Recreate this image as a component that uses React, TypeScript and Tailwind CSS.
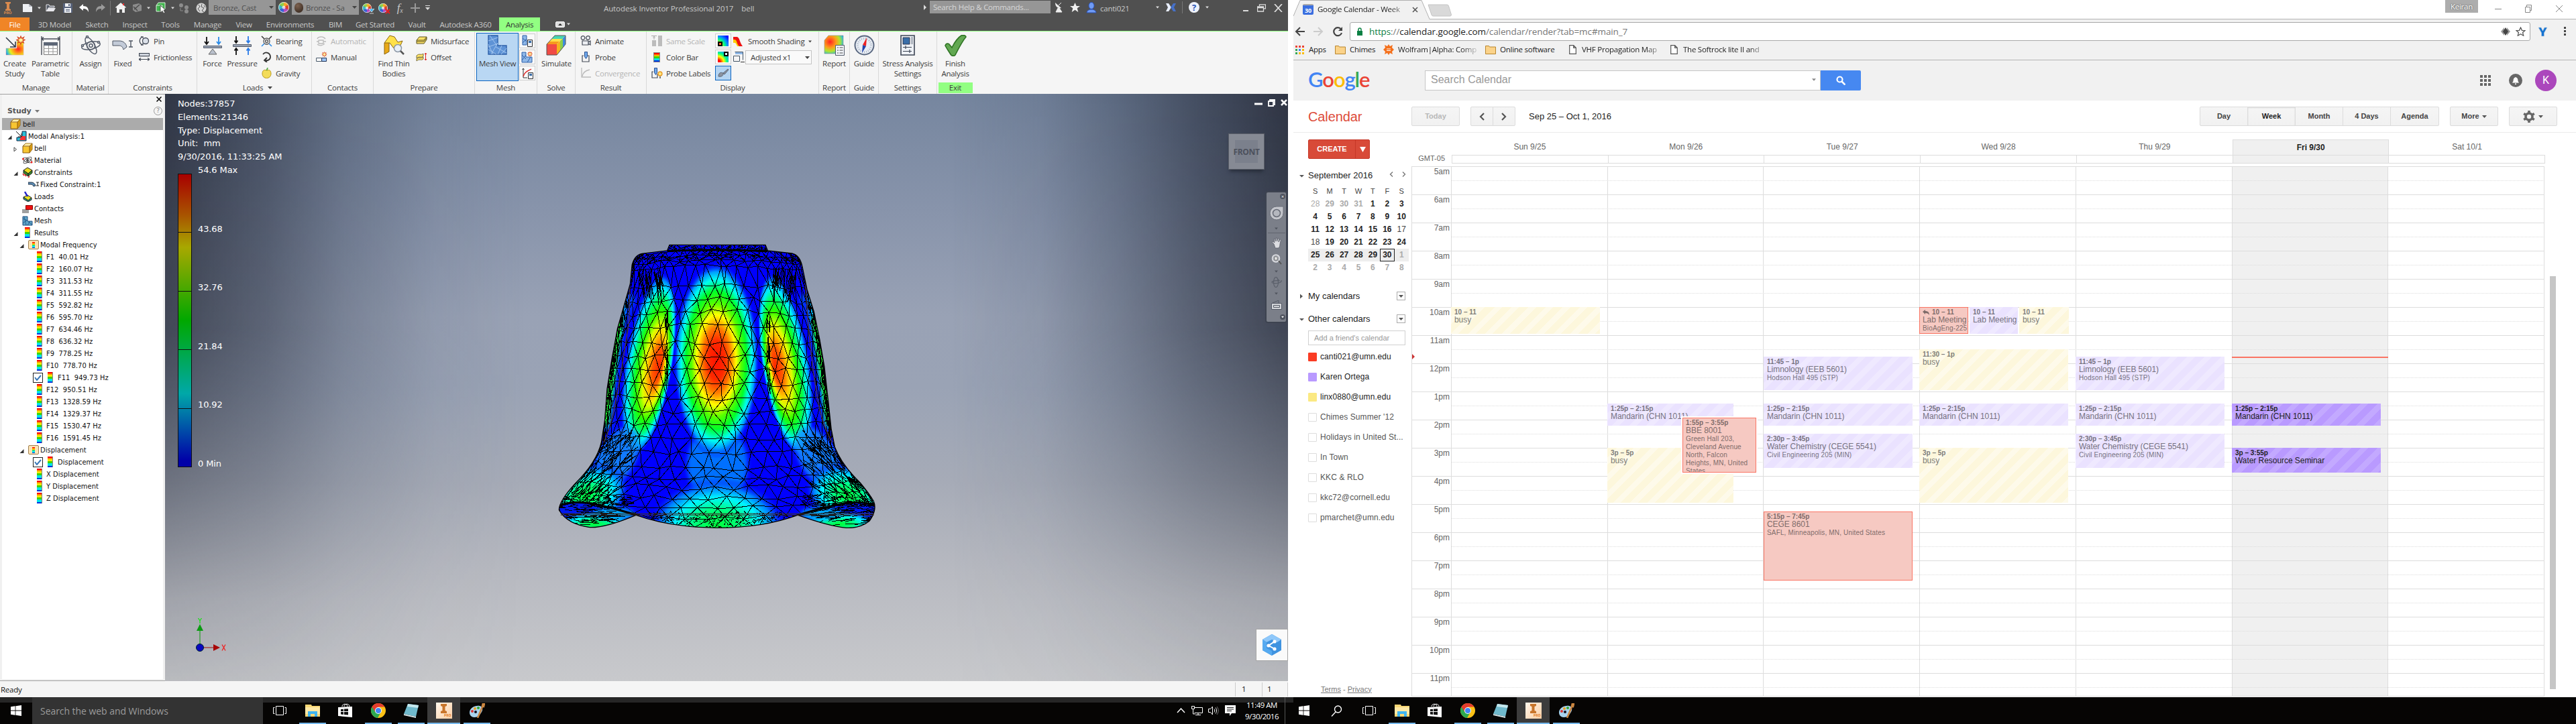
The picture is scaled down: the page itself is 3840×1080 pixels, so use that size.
import React from "react";

/* ------------------------------------------------------------------ */
/* Small shared glyphs                                                  */
/* ------------------------------------------------------------------ */

type Cls = { className?: string };

const Caret = ({ className = "text-[#444]" }: Cls) => (
  <svg width="7" height="4" viewBox="0 0 7 4" className={"shrink-0 " + className}>
    <path d="M0 0h7L3.500 4z" fill="currentColor" />
  </svg>
);

const Wheel = ({ s = 16 }: { s?: number }) => (
  <svg width={s} height={s} viewBox="0 0 16 16">
    <path d="M8 8V0a8 8 0 0 1 7 4z" fill="#f6a623" />
    <path d="M8 8l7-4a8 8 0 0 1 0 8z" fill="#e2412e" />
    <path d="M8 8l7 4a8 8 0 0 1-7 4z" fill="#b54ac0" />
    <path d="M8 8v8a8 8 0 0 1-7-4z" fill="#3a63d8" />
    <path d="M8 8l-7 4a8 8 0 0 1 0-8z" fill="#37b6c9" />
    <path d="M8 8L1 4a8 8 0 0 1 7-4z" fill="#8fd14a" />
    <circle cx="8" cy="8" r="2.500" fill="#fff" opacity=".7" />
    <circle cx="8" cy="8" r="7.500" fill="none" stroke="#ddd" />
  </svg>
);

const Heat = ({ className = "h-[16px] w-[8px]" }: Cls) => (
  <span
    className={
      "block shrink-0 border-r border-[#888] bg-[linear-gradient(#f00_0_12%,#ff8a00_12%_28%,#f4e800_28%_42%,#3fd400_42%_60%,#00e5e5_60%_86%,#0030e0_86%)] " +
      className
    }
  />
);

const Cube = () => (
  <svg width="16" height="16" viewBox="0 0 16 16">
    <path d="M1 5l4-4h10v9l-4 5H1z" fill="#f7c531" stroke="#8a5a10" />
    <path d="M1.500 5.500L5 1.500h9.500L11 5.500z" fill="#fff0b0" />
    <path d="M11 5.500l3.500-4V10L11 14.500z" fill="#d79a12" />
    <path d="M1 5h10v10M11 5l4-4" fill="none" stroke="#8a5a10" />
  </svg>
);

/* ------------------------------------------------------------------ */
/* Inventor: title bar                                                  */
/* ------------------------------------------------------------------ */

const TitleBar = () => (
  <div className="flex h-[26px] items-start text-[#c8c8c8]">
    <div className="flex h-[23px] w-[29px] flex-col items-center pr-[6px] pt-[3px]">
      <svg width="10" height="13" viewBox="0 0 10 13">
        <path d="M1 0h8v2L7 3v7l2 1v2H1v-2l2-1V3L1 2z" fill="#d98a4e" />
      </svg>
      <span className="text-[6px] font-bold leading-[7px] text-[#d98a4e]">PRO</span>
    </div>
    <div className="flex h-[23px] items-center">
      <span className="flex w-[24px] justify-center">
        <svg width="16" height="14" viewBox="0 0 16 14"><path d="M1 1h9l5 4v8H1z" fill="#eef0f4" /><path d="M10 1v4h5" fill="#b9bcc4" /></svg>
      </span>
      <span className="flex w-[10px] justify-center"><Caret className="w-[5px] text-[#ddd]" /></span>
      <span className="flex w-[26px] justify-center">
        <svg width="16" height="13" viewBox="0 0 16 13"><path d="M1 12V2h4l1 2h7v2H5z" fill="#555b66" stroke="#e8e8ec" /><path d="M4 7h11l-3 5H1z" fill="#e8e8ec" /></svg>
      </span>
      <span className="flex w-[24px] justify-center">
        <svg width="14" height="14" viewBox="0 0 14 14"><path d="M0 0h14v14H0z" fill="#59647c" /><path d="M3 0h8v5H3zM2 7h10v7H2z" fill="#f0f2f6" /><path d="M8 1h2v3H8zM4 9h6v1H4zM4 11h6v1H4z" fill="#59647c" /></svg>
      </span>
      <span className="flex w-[24px] justify-center">
        <svg width="15" height="12" viewBox="0 0 15 12"><path d="M0 5l6-5v3c6 0 8 3 8 9-2-4-4-5-8-5v3z" fill="#fff" /></svg>
      </span>
      <span className="flex w-[24px] justify-center">
        <svg width="15" height="12" viewBox="0 0 15 12"><path d="M15 5L9 0v3C3 3 1 6 1 12c2-4 4-5 8-5v3z" fill="#9a9a9a" /></svg>
      </span>
      <span className="flex h-[22px] w-[7px] justify-center"><span className="w-px bg-[#777]" /></span>
      <span className="flex w-[24px] justify-center">
        <svg width="16" height="15" viewBox="0 0 16 15"><path d="M8 0l8 7-1 1-1-1v8h-4v-5H6v5H2V7L1 8 0 7z" fill="#f2f2f2" /><path d="M11 1h2v3h-2z" fill="#e33" /></svg>
      </span>
      <span className="flex w-[24px] justify-center">
        <svg width="17" height="15" viewBox="0 0 17 15"><path d="M2 3l9-2 4 3v8l-9 2-4-3z" fill="#8c8c8c" /><path d="M4 10l8-7M3 6l6 6" stroke="#4a4a4a" strokeWidth="1.500" /></svg>
      </span>
      <span className="flex w-[10px] justify-center"><Caret className="w-[5px] text-[#ddd]" /></span>
      <span className="flex w-[28px] justify-center">
        <svg width="17" height="18" viewBox="0 0 17 18"><path d="M1 5l3-4h10v9l-3 4H1z" fill="#3fb24c" stroke="#dff5df" /><path d="M1 5h9v9" fill="none" stroke="#dff5df" /><path d="M7 5v11l3-3 2 4 2-1-2-4h3z" fill="#fff" stroke="#333" strokeWidth=".8" /></svg>
      </span>
      <span className="flex w-[6px] justify-center"><Caret className="w-[5px] text-[#ddd]" /></span>
      <span className="flex w-[28px] justify-center">
        <svg width="16" height="16" viewBox="0 0 16 16" fill="#8c8c8c"><circle cx="4" cy="4" r="3" /><circle cx="12" cy="7" r="3" /><circle cx="12" cy="13" r="3" /><path d="M3 8v4h4" stroke="#8c8c8c" fill="none" /></svg>
      </span>
      <span className="flex w-[23px] justify-center">
        <svg width="16" height="16" viewBox="0 0 16 16"><circle cx="8" cy="8" r="7.500" fill="#d4d4d4" /><path d="M4 3l2 3-3 3 3 4M9 2l-1 4 4 2-3 4 3 2M12 4l2 3" stroke="#555" fill="none" /></svg>
      </span>
    </div>
    <div className="flex h-[22px] w-[100px] items-center justify-between bg-[#969696] pl-[7px] pr-[3px] text-[#505050]">
      <span>Bronze, Cast</span><Caret />
    </div>
    <span className="flex h-[22px] w-[24px] items-center justify-center"><Wheel /></span>
    <div className="flex h-[22px] w-[100px] items-center bg-[#969696] pl-[4px] pr-[3px] text-[#505050]">
      <span className="mr-[4px] h-[15px] w-[13px] rounded-full bg-[radial-gradient(circle_at_35%_30%,#7d6250,#2d2018)]" />
      <span className="flex-1">Bronze - Sa</span><Caret />
    </div>
    <div className="flex h-[23px] items-center">
      <span className="relative flex w-[24px] justify-center"><Wheel s={14} />
        <svg width="8" height="8" viewBox="0 0 8 8" className="absolute -bottom-[2px] right-[1px]"><path d="M0 0h8L4 5zM1 7h6" fill="#3fb0e8" stroke="#fff" strokeWidth=".7" /></svg>
      </span>
      <span className="relative flex w-[24px] justify-center"><Wheel s={14} />
        <svg width="8" height="8" viewBox="0 0 8 8" className="absolute -bottom-[2px] right-[1px]"><path d="M1 1l6 6M7 1L1 7" stroke="#e02020" strokeWidth="2" /></svg>
      </span>
      <span className="w-[26px] text-center font-['Liberation_Serif'] text-[17px] italic leading-[20px]">f<sub className="text-[10px]">x</sub></span>
      <span className="flex w-[20px] justify-center"><svg width="14" height="14" viewBox="0 0 14 14"><path d="M7 0v14M0 7h14" stroke="#999" strokeWidth="2" /></svg></span>
      <span className="flex w-[16px] justify-center"><svg width="7" height="8" viewBox="0 0 7 8"><path d="M0 0h7v1H0zM0 3h7L3.500 7z" fill="#ddd" /></svg></span>
    </div>
    <div className="ml-[255px] flex h-[24px] w-[474px] items-center gap-[12px] tracking-[-0.1px]">
      <span>Autodesk Inventor Professional 2017</span><span>bell</span>
    </div>
    <div className="flex h-[22px] items-center">
      <svg width="12" height="8" viewBox="0 0 12 8"><path d="M3 0l4 4-4 4z" fill="#ddd" /></svg>
      <div className="mt-[-1px] flex h-[19px] w-[180px] items-center bg-[#969696] pl-[5px] text-[#d6d6d6]">Search Help &amp; Commands...</div>
      <span className="flex w-[24px] justify-center">
        <svg width="13" height="16" viewBox="0 0 13 16"><path d="M1 1c0 6 4 9 9 8z" fill="#eee" /><path d="M5 9l-3 6h9L7 9M6 5l4-4" stroke="#eee" fill="#eee" /></svg>
      </span>
      <span className="flex w-[24px] justify-center">
        <svg width="15" height="14" viewBox="0 0 15 14"><path d="M7.500 0l2.200 5H15l-4.300 3.300L12.300 14 7.500 10.700 2.700 14l1.600-5.700L0 5h5.300z" fill="#f2f2f2" /></svg>
      </span>
      <span className="flex w-[25px] justify-center">
        <svg width="16" height="17" viewBox="0 0 16 17"><ellipse cx="8" cy="5.500" rx="4" ry="5" fill="#6f9bf5" stroke="#2a4fb0" /><path d="M1 16c0-3 3-5 7-5s7 2 7 5z" fill="#6f9bf5" stroke="#2a4fb0" /></svg>
      </span>
      <span className="mt-[2px] w-[84px] pl-[1px]">canti021</span>
      <Caret className="w-[5px] text-[#ddd]" />
      <span className="flex w-[34px] justify-center">
        <svg width="15" height="14" viewBox="0 0 15 14"><path d="M0 1h4l4 6-4 6H0l3-6z" fill="#e8eefc" /><path d="M15 1h-4L7 7l4 6h4l-3-6z" fill="#4670c8" /></svg>
      </span>
      <span className="h-[18px] w-px bg-[#777]" />
      <span className="flex w-[34px] justify-center">
        <span className="flex h-[16px] w-[16px] items-center justify-center rounded-full bg-[#eef2fb] text-[13px] font-bold text-[#2a55b4]">?</span>
      </span>
      <Caret className="w-[5px] text-[#ddd]" />
    </div>
    <div className="ml-[50px] flex h-[24px] items-center gap-[12px]">
      <svg width="10" height="12" viewBox="0 0 10 12"><path d="M1 10h8" stroke="#ddd" strokeWidth="2" /></svg>
      <svg width="13" height="12" viewBox="0 0 13 12"><path d="M3.500 3V.9h9v6H10M.500 4h9v7h-9zM.500 5.500h9" stroke="#ddd" fill="none" strokeWidth="1.300" /></svg>
      <svg width="13" height="12" viewBox="0 0 13 12"><path d="M1 0l11 12M12 0L1 12" stroke="#ddd" strokeWidth="1.800" /></svg>
    </div>
  </div>
);

const TabRow = () => (
  <div className="flex h-[20px] items-center text-[#c8c8c8]">
    <span className="flex h-full w-[44px] items-center justify-center bg-[#f08526] text-white">File</span>
    <span className="w-[75px] text-center">3D Model</span>
    <span className="w-[51px] text-center">Sketch</span>
    <span className="w-[62px] text-center">Inspect</span>
    <span className="w-[44px] text-center">Tools</span>
    <span className="w-[67px] text-center">Manage</span>
    <span className="w-[41px] text-center">View</span>
    <span className="w-[97px] text-center">Environments</span>
    <span className="w-[38px] text-center">BIM</span>
    <span className="w-[80px] text-center">Get Started</span>
    <span className="w-[45px] text-center">Vault</span>
    <span className="w-[100px] text-center">Autodesk A360</span>
    <span className="flex h-full w-[61px] items-center justify-center bg-[#92ff82] text-[#333]">Analysis</span>
    <span className="ml-[23px] flex h-[9px] w-[14px] items-center justify-center rounded-[2px] border border-white bg-[#ddd]">
      <svg width="6" height="3" viewBox="0 0 6 3"><path d="M0 3h6L3 0z" fill="#222" /></svg>
    </span>
    <Caret className="ml-[3px] w-[5px] text-[#ddd]" />
  </div>
);

/* ------------------------------------------------------------------ */
/* Inventor: ribbon                                                     */
/* ------------------------------------------------------------------ */

const Panel = ({ label, className = "", children }: { label: React.ReactNode; className?: string; children: React.ReactNode }) => (
  <div className={"flex h-full shrink-0 flex-col border-r border-[#d9d9d9] " + className}>
    <div className="flex h-[75px] items-start pt-[2px]">{children}</div>
    <div className="flex h-[17px] items-center justify-center text-[#3c3c3c]">{label}</div>
  </div>
);

const Big = ({ icon, a, b, className = "" }: { icon: React.ReactNode; a: string; b?: string; className?: string }) => (
  <div className={"flex shrink-0 flex-col items-center pt-[2px] " + className}>
    <div className="flex h-[33px] items-center justify-center">{icon}</div>
    <div className="mt-[3px] whitespace-nowrap text-center leading-[15px]">{a}{b && <><br />{b}</>}</div>
  </div>
);

const Small = ({ icon, text, off }: { icon: React.ReactNode; text: string; off?: boolean }) => (
  <div className={"flex h-[24px] items-center whitespace-nowrap " + (off ? "text-[#b4b4b4]" : "")}>
    <span className="mr-[5px] flex w-[18px] justify-center">{icon}</span>{text}
  </div>
);

const Tile = ({ on, children }: { on?: boolean; children: React.ReactNode }) => (
  <span className={"flex h-[22px] w-[24px] items-center justify-center border " + (on ? "border-[#0a64c0] bg-[#b4d4f2]" : "border-[#cdcdcd] bg-[#fafafa]")}>{children}</span>
);

const Star = () => <path d="M0-5l1.200 3.200L4.500-3.600 2.900-.6 6 .6 3 1.900l1.300 3L1.300 3.600 0 7-1.300 3.600l-3 1.300L-3 1.900-6 .6l3.100-1.200-1.600-3 3.300 1.800z" fill="#fff3a0" stroke="#d8421c" strokeWidth="1.200" />;

const ico = {
  create: <svg width="31" height="30" viewBox="0 0 31 30"><defs><radialGradient id="cs" cx=".7" cy=".6" r=".8"><stop offset="0" stopColor="#f22" /><stop offset=".35" stopColor="#ff9b1a" /><stop offset=".6" stopColor="#e9ee20" /><stop offset=".85" stopColor="#2bc0d8" /><stop offset="1" stopColor="#2a6fd8" /></radialGradient></defs><path d="M2 19h16V7h10v22H2z" fill="url(#cs)" stroke="#d99" strokeWidth=".5" /><path d="M2 3l14 14M16 9v8H8" stroke="#333b48" strokeWidth="1.600" fill="none" /><g transform="translate(24 6)"><Star /></g></svg>,
  table: <svg width="31" height="30" viewBox="0 0 31 30"><path d="M2 1v28M29 1v28M2 5h27M5 2.500L2 5l3 2.500M26 2.500L29 5l-3 2.500" stroke="#4a4f59" fill="none" strokeWidth="1.400" /><path d="M5.500 10.500h20v18h-20z" fill="#fff" stroke="#777" /><path d="M5 10h21v5H5z" fill="#5d6676" /><path d="M5 19.500h21M5 24h21M12.500 15v14M19 15v14" stroke="#999" /></svg>,
  atom: <svg width="31" height="30" viewBox="0 0 31 30" fill="none" stroke="#555d6b" strokeWidth="1.500"><ellipse cx="15.500" cy="15" rx="14" ry="5.500" transform="rotate(-12 15.500 15)" /><ellipse cx="15.500" cy="15" rx="14" ry="5.500" transform="rotate(60 15.500 15)" /><circle cx="15.500" cy="15" r="6" /><circle cx="15.500" cy="15" r="2.500" /><circle cx="3" cy="15" r="1.500" fill="#fff" /><circle cx="27" cy="10" r="1.500" fill="#fff" /><circle cx="10" cy="2" r="1.500" fill="#fff" /></svg>,
  fixed: <svg width="32" height="20" viewBox="0 0 32 20"><path d="M1 3h10c6 0 10 4 11 9l-5 4c-1-4-3-6-7-6H1z" fill="#c3cbd8" stroke="#4d5563" /><path d="M25 3h6M25 12h6M28 3v9" stroke="#4d5563" strokeWidth="1.400" /></svg>,
  force: <svg width="30" height="30" viewBox="0 0 30 30"><path d="M6 2v11M3 9l3 4 3-4" stroke="#111" fill="none" strokeWidth="1.800" /><path d="M24 2v11M21 9l3 4 3-4" stroke="#2a8be8" fill="none" strokeWidth="1.800" /><path d="M1.500 15.500h27v3h-27z" fill="#98a2b3" stroke="#555d6b" /><path d="M15 20l-6 8h12z" fill="#b9c0cc" stroke="#666" /></svg>,
  pressure: <svg width="30" height="30" viewBox="0 0 30 30"><path d="M6 1v10M3.500 7.500L6 11l2.500-3.500M6 29V19M3.500 22.500L6 19l2.500 3.500" stroke="#111" fill="none" strokeWidth="1.800" /><path d="M24 1v10M21.500 7.500L24 11l2.500-3.500M24 29V19M21.500 22.500L24 19l2.500 3.500" stroke="#2a7be8" fill="none" strokeWidth="1.800" /><path d="M1.500 13.500h27v3h-27z" fill="#98a2b3" stroke="#555d6b" /></svg>,
  thin: <svg width="31" height="31" viewBox="0 0 31 31"><path d="M1 12l7-3v16l-7 4z" fill="#e8a817" stroke="#8a6410" /><path d="M1 12L9 1l7 2 5 8 7-2-6 13-7-2-6-8z" fill="#ffe14a" stroke="#8a6410" /><circle cx="21" cy="20" r="5.500" fill="#e8f0f8" stroke="#8c97a5" strokeWidth="1.500" /><path d="M25 24l5 5" stroke="#555" strokeWidth="2.500" /></svg>,
  mesh: <svg width="30" height="31" viewBox="0 0 30 31"><path d="M1 1h14v15h13v13H1z" fill="#5e93d6" stroke="#2d5fa8" strokeWidth="1.400" /><path d="M1 9L15 4M3 1l10 14M1 18l14-5M1 22l12 7M5 29L15 12M15 29l6-13M12 18l16 9M20 29l8-9M1 14l7 15" stroke="#a9c9f0" strokeWidth=".9" /></svg>,
  simulate: <svg width="31" height="31" viewBox="0 0 31 31"><path d="M1 14h15v16H1z" fill="#f14b45" /><path d="M1 14L5 10h15l-4 4z" fill="#f79a1d" /><path d="M5 10l3.500-4H24l-4 4z" fill="#ffe14a" /><path d="M8.500 6L13 1h16l-5 5z" fill="#47d6b2" /><path d="M16 14l5-5v15l-5 6z" fill="#f5b41d" /><path d="M21 9l4-4v14l-4 5z" fill="#8bd04a" /><path d="M25 5l4-4v13l-4 5z" fill="#3f8de0" /><path d="M1 14L13 1h16v13L16 30H1z" fill="none" stroke="#555" /></svg>,
  report: <svg width="31" height="31" viewBox="0 0 31 31"><defs><radialGradient id="rp" cx=".3" cy=".35" r=".8"><stop offset="0" stopColor="#f22" /><stop offset=".4" stopColor="#ff9b1a" /><stop offset=".65" stopColor="#b6e22a" /><stop offset=".9" stopColor="#2bc0d8" /><stop offset="1" stopColor="#2a6fd8" /></radialGradient></defs><path d="M1 8l6-7h22v16l-7 11H1z" fill="url(#rp)" stroke="#888" strokeWidth=".6" /><path d="M17.500 15.500h13v15h-13z" fill="#f2f5fa" stroke="#555d6b" /><path d="M20 19h2M20 23h2M20 27h2M23.500 19h5M23.500 23h5M23.500 27h5" stroke="#444" /></svg>,
  guide: <svg width="31" height="31" viewBox="0 0 31 31"><circle cx="15.500" cy="15.500" r="14" fill="#e9eef5" stroke="#5a6880" strokeWidth="2" /><circle cx="15.500" cy="15.500" r="10" fill="none" stroke="#a9b4c4" strokeDasharray="1 2" strokeWidth="3" /><path d="M19 4l-1 13-5-2z" fill="#e22" /><path d="M12 27l1-12 5 2z" fill="#24a" /></svg>,
  settings: <svg width="22" height="31" viewBox="0 0 22 31"><path d="M1 1h20v29H1z" fill="#eef1f6" stroke="#3d4554" strokeWidth="1.600" /><path d="M4 4h10v10H4z" fill="#3a6ea8" stroke="#223" strokeWidth=".8" /><path d="M16 3h3v11h-3z" fill="#b0b6c0" /><path d="M4 18.500h13M4 24.500h13M8 16v5M14 22v5" stroke="#3d4554" strokeWidth="1.200" /></svg>,
  finish: <svg width="33" height="32" viewBox="0 0 33 32"><path d="M1 16c1-3 4-4 6-2l4 5C15 11 20 4 25 1c3-1 7 0 7 2C26 10 21 20 16 30c-2 2-5 2-7-1C6 24 3 20 1 16z" fill="#62a852" stroke="#2f7424" strokeWidth="1.600" /></svg>,
  pin: <svg width="16" height="16" viewBox="0 0 16 16" fill="none" stroke="#444b57" strokeWidth="1.300"><circle cx="10" cy="8" r="4.500" fill="#dde2ea" /><path d="M5 2C0 5 0 11 5 14M3 14h3v-3M3 2h3v2" /></svg>,
  frict: <svg width="16" height="13" viewBox="0 0 16 13" fill="none" stroke="#444b57" strokeWidth="1.200"><path d="M.6.600h15v4H.6z" fill="#dde2ea" /><path d="M0 9.500h16M3 7.500L0 9.500l3 2M13 7.500l3 2-3 2" /></svg>,
  bearing: <svg width="17" height="17" viewBox="0 0 17 17" fill="none"><path d="M1 1l4 4M16 1l-4 4" stroke="#333" strokeWidth="1.500" /><path d="M1 16l4-4M16 16l-4-4" stroke="#2a8be8" strokeWidth="1.500" /><circle cx="8.500" cy="8.500" r="4.500" stroke="#555" strokeWidth="1.300" /><circle cx="8.500" cy="8.500" r="2" stroke="#555" strokeWidth="1.300" /></svg>,
  moment: <svg width="15" height="16" viewBox="0 0 15 16" fill="none" stroke="#333" strokeWidth="1.800"><path d="M2 4c4-5 11-2 11 4 0 4-4 6-8 5M8 9l-4 4 4 3" /></svg>,
  gravity: <svg width="15" height="16" viewBox="0 0 15 16"><path d="M7.500 4C3 2 1 5 1 9c0 4 3 6.500 6.500 6.500S14 13 14 9c0-4-2-7-6.500-5z" fill="#f3dc5a" stroke="#b99a20" /><path d="M7.500 4L9 0" stroke="#5a4" strokeWidth="1.800" /></svg>,
  auto: <svg width="16" height="16" viewBox="0 0 16 16" fill="none" stroke="#bbb" strokeWidth="1.300"><path d="M2 5c1-3 8-5 12 0M4 7h7v5H4zM1 9h3M11 9h4M2 13c3 3 9 2 11-1" /></svg>,
  manual: <svg width="17" height="16" viewBox="0 0 17 16"><path d="M.600 9.500h8v5h-8z" fill="#fff" stroke="#456" /><path d="M8.600 9.500h7v5h-7z" fill="#9cc4f5" stroke="#235" /><g transform="translate(12.500 3.500) scale(.6)"><Star /></g></svg>,
  mid: <svg width="17" height="14" viewBox="0 0 17 14"><path d="M1 6l4-5h11v4l-4 6H1z" fill="#ffe36a" stroke="#5a5320" /><path d="M1 8h11l4-5M1 6h11l4-5" stroke="#5a5320" fill="none" /></svg>,
  off: <svg width="17" height="14" viewBox="0 0 17 14"><path d="M1 5c4-4 6 0 10-3v4C8 9 5 5 1 9zM1 10c4-4 6 0 10-3v3c-3 3-6-1-10 3z" fill="#ffe36a" stroke="#5a5320" strokeWidth=".8" /><path d="M14.500 1v11M13 3l1.500-2L16 3M13 10l1.500 2 1.500-2" stroke="#d22" fill="none" /></svg>,
  animate: <svg width="16" height="16" viewBox="0 0 16 16" fill="#eef0f4" stroke="#444b57" strokeWidth="1.200"><circle cx="4" cy="3.500" r="2.800" /><circle cx="11.500" cy="3.500" r="2.800" /><path d="M3 8h9v6H3zM12 10l3-2v6l-3-2" /></svg>,
  probe: <svg width="13" height="16" viewBox="0 0 13 16"><path d="M4.500.500h4v7l-2 3-2-3z" fill="#6fa8ea" stroke="#2a4f90" /><path d="M3 6H1v9h10V6H9" fill="none" stroke="#444b57" strokeWidth="1.200" /></svg>,
  probeLabel: <svg width="17" height="16" viewBox="0 0 17 16"><path d="M4.500.500h4v7l-2 3-2-3z" fill="#6fa8ea" stroke="#2a4f90" /><path d="M3 6H1v9h8V9" fill="none" stroke="#444b57" strokeWidth="1.200" /><circle cx="13" cy="9" r="3" fill="#ffe680" stroke="#e8961c" strokeWidth="1.300" /><path d="M12 13h2v3h-2z" fill="#777" /></svg>,
  conv: <svg width="16" height="16" viewBox="0 0 16 16" fill="none" stroke="#bbb" strokeWidth="1.300"><path d="M2 0v14h14M3 13C4 7 8 4 14 3" /></svg>,
  same: <svg width="16" height="16" viewBox="0 0 16 16"><path d="M10 0h6v16h-6zM1 7h6v9H1z" fill="#bcbcbc" /><path d="M0 .500h8M4 1v5M2.500 3.500L4 1.500l1.500 2" stroke="#aaa" fill="none" /></svg>,
  meshdoc: <svg width="16" height="18" viewBox="0 0 16 18"><path d="M1 1h6v14H1z" fill="#8fb8e8" stroke="#2d5fa8" /><path d="M1 5l6 5M1 12l6-6" stroke="#2d5fa8" /><path d="M8.500 7.500h7v10h-7z" fill="#eef1f6" stroke="#333" /><path d="M10 9h4v3h-4z" fill="#3a6ea8" /></svg>,
  meshnew: <svg width="18" height="18" viewBox="0 0 18 18"><path d="M1 2h6v7h9v8H1z" fill="#8fb8e8" stroke="#2d5fa8" /><path d="M1 6l6 6M1 14l6-8M9 17l5-8" stroke="#2d5fa8" /><g transform="translate(13 4) scale(.6)"><Star /></g></svg>,
  graph: <svg width="17" height="17" viewBox="0 0 17 17"><path d="M2 1v14h6M2 1L.500 3M2 1l1.500 2" stroke="#333" fill="none" /><path d="M2 13C4 6 9 5 14 2" stroke="#d22" strokeWidth="1.400" fill="none" /><path d="M9.500 7.500h7v9h-7z" fill="#eef1f6" stroke="#333" /><path d="M11 9h4v3h-4z" fill="#3a6ea8" /></svg>,
  smooth: <svg width="14" height="14" viewBox="0 0 14 14"><path d="M0 0h6c4 2 3 7 8 14H8C5 11 6 6 0 8z" fill="#e11" /><path d="M0 4c7-1 4 6 9 10H6C4 10 4 8 0 9z" fill="#fc0" /></svg>,
  adjust: <svg width="17" height="17" viewBox="0 0 17 17"><path d="M2.500.500h12v12M.500 6.500h9v8h-9z" fill="none" stroke="#456" /><path d="M3 1h11v3H3z" fill="#8fb8e8" /><path d="M11 15.500h6" stroke="#333" /></svg>,
  brush: <svg width="17" height="15" viewBox="0 0 17 15"><path d="M1 12c0-5 3-7 7-5 1 4-3 6-7 5zM8 7l7-6 1 1-6 7z" fill="#8c93a0" stroke="#4d5563" strokeWidth=".8" /></svg>,
};

const MaxTile = ({ flip }: { flip?: boolean }) => (
  <span className={"relative block h-[16px] w-[16px] " + (flip ? "bg-[radial-gradient(circle_at_0%_100%,#f00_15%,#ff0_40%,#0f8_60%,#08f_85%)]" : "bg-[radial-gradient(circle_at_0%_100%,#ff0_20%,#0f8_45%,#08f_65%,#00f_90%)]")}>
    <span className={"absolute h-[7px] w-[7px] border-2 border-black " + (flip ? "right-0 top-0 bg-[#dff]" : "bottom-0 left-0 bg-[#f62]")} />
  </span>
);

const Ribbon = () => (
  <div className="flex h-[94px] border-t border-[#92ff82] bg-[#f5f5f5] text-[#3c3c3c]">
    <Panel className="w-[108px]" label="Manage">
      <Big className="w-[44px]" icon={ico.create} a="Create" b="Study" />
      <Big className="w-[62px]" icon={ico.table} a="Parametric" b="Table" />
    </Panel>
    <Panel className="w-[54px]" label="Material"><Big className="w-[54px]" icon={ico.atom} a="Assign" /></Panel>
    <Panel className="w-[132px]" label="Constraints">
      <Big className="w-[42px]" icon={ico.fixed} a="Fixed" />
      <div className="ml-[2px]"><Small icon={ico.pin} text="Pin" /><Small icon={ico.frict} text="Frictionless" /></div>
    </Panel>
    <Panel className="w-[171px]" label={<span className="flex items-center gap-[7px] pl-[10px]">Loads <Caret /></span>}>
      <Big className="w-[45px]" icon={ico.force} a="Force" />
      <Big className="w-[44px]" icon={ico.pressure} a="Pressure" />
      <div className="ml-[5px]"><Small icon={ico.bearing} text="Bearing" /><Small icon={ico.moment} text="Moment" /><Small icon={ico.gravity} text="Gravity" /></div>
    </Panel>
    <Panel className="w-[92px]" label="Contacts">
      <div className="ml-[5px]"><Small icon={ico.auto} text="Automatic" off /><Small icon={ico.manual} text="Manual" /></div>
    </Panel>
    <Panel className="w-[151px]" label="Prepare">
      <Big className="w-[60px]" icon={ico.thin} a="Find Thin" b="Bodies" />
      <div className="ml-[2px]"><Small icon={ico.mid} text="Midsurface" /><Small icon={ico.off} text="Offset" /></div>
    </Panel>
    <Panel className="w-[93px]" label="Mesh">
      <div className="ml-[2px] h-[72px] w-[63px] border border-[#0a64c0] bg-[#b9d7f3]"><Big icon={ico.mesh} className="-ml-px -mt-px w-[63px]" a="Mesh View" /></div>
      <div className="ml-px mt-px flex flex-col gap-[2px]"><Tile>{ico.meshdoc}</Tile><Tile>{ico.meshnew}</Tile><Tile>{ico.graph}</Tile></div>
    </Panel>
    <Panel className="w-[57px]" label="Solve"><Big className="w-[57px]" icon={ico.simulate} a="Simulate" /></Panel>
    <Panel className="w-[106px]" label="Result">
      <div className="ml-[6px]"><Small icon={ico.animate} text="Animate" /><Small icon={ico.probe} text="Probe" /><Small icon={ico.conv} text="Convergence" off /></div>
    </Panel>
    <Panel className="w-[257px]" label="Display">
      <div className="ml-[6px] w-[96px]"><Small icon={ico.same} text="Same Scale" off /><Small icon={<Heat className="h-[15px] w-[10px] border border-[#333]" />} text="Color Bar" /><Small icon={ico.probeLabel} text="Probe Labels" /></div>
      <div className="mt-px flex flex-col gap-[2px]"><Tile><MaxTile /></Tile><Tile><MaxTile flip /></Tile><Tile on>{ico.brush}</Tile></div>
      <div className="ml-[3px]">
        <div className="flex h-[25px] items-center"><span className="w-[22px]">{ico.smooth}</span><span className="mr-[6px]">Smooth Shading</span><Caret className="w-[5px] text-[#444]" /></div>
        <div className="flex h-[23px] items-center"><span className="w-[18px]">{ico.adjust}</span>
          <span className="flex h-[21px] w-[99px] items-center justify-between border border-[#c4c4c4] bg-[#fafafa] pl-[7px] pr-[2px]">Adjusted x1<Caret /></span></div>
      </div>
    </Panel>
    <Panel className="w-[46px]" label="Report"><Big className="w-[45px]" icon={ico.report} a="Report" /></Panel>
    <Panel className="w-[43px]" label="Guide"><Big className="w-[42px]" icon={ico.guide} a="Guide" /></Panel>
    <Panel className="w-[87px]" label="Settings"><Big className="w-[86px]" icon={ico.settings} a="Stress Analysis" b="Settings" /></Panel>
    <Panel className="w-[54px] border-r-0" label={<span className="flex h-[16px] w-[51px] items-center justify-center bg-[#92ff82]">Exit</span>}><Big className="w-[54px]" icon={ico.finish} a="Finish" b="Analysis" /></Panel>
  </div>
);

/* ------------------------------------------------------------------ */
/* Inventor: model browser                                              */
/* ------------------------------------------------------------------ */

const Fold = ({ open }: { open?: boolean }) => (
  <svg width="7" height="8" viewBox="0 0 7 8">{open ? <path d="M6.500 1v6H.5z" fill="#333" /> : <path d="M1 .8v6L4.500 3.800z" fill="#fff" stroke="#444" />}</svg>
);
const Check = () => (
  <span className="flex h-[15px] w-[15px] shrink-0 items-center justify-center border border-[#222] bg-white">
    <svg width="11" height="9" viewBox="0 0 11 9"><path d="M1 4l3 4 6-7" fill="none" stroke="#3b78b8" strokeWidth="2" /></svg>
  </span>
);
const Folder = () => (
  <span className="relative flex h-[14px] w-[16px] items-end justify-center rounded-[2px] border border-[#a08050] bg-[#fbe3b5] pb-px"><Heat className="h-[9px] w-[4px] border-r-0" /></span>
);

const NODES: { pad: string; fold?: boolean; icon: React.ReactNode; text: string; w: string }[] = [
  { pad: "pl-[8px]", fold: true, icon: <svg width="16" height="16" viewBox="0 0 16 16"><path d="M1 10h8V1h6v14H1z" fill="#2bc0d8" stroke="#124" /><path d="M8 8h6v6H5z" fill="#f33" /><path d="M0 1l8 8M8 4v5H3" stroke="#111" fill="none" /></svg>, text: "Modal Analysis:1", w: "w-[16px]" },
  { pad: "pl-[17px]", fold: false, icon: <Cube />, text: "bell", w: "w-[16px]" },
  { pad: "pl-[20px]", icon: <svg width="16" height="14" viewBox="0 0 16 14" fill="none" stroke="#444"><ellipse cx="8" cy="7" rx="7" ry="3" transform="rotate(20 8 7)" /><ellipse cx="8" cy="7" rx="7" ry="3" transform="rotate(-35 8 7)" /><circle cx="8" cy="7" r="1.500" fill="#555" /><circle cx="1.500" cy="5" r="1.500" fill="#e22" stroke="none" /><circle cx="14" cy="10" r="1.500" fill="#e22" stroke="none" /></svg>, text: "Material", w: "w-[16px]" },
  { pad: "pl-[17px]", fold: true, icon: <svg width="16" height="16" viewBox="0 0 16 16"><path d="M2 5l6-4 7 4-6 5z" fill="#e8d820" stroke="#222" /><path d="M2 5l7 5v4L2 9zM15 5v4l-6 5v-4z" fill="#3a8a2a" stroke="#222" /><path d="M1 10l2 3M4 11l2 3M11 14l-2 2" stroke="#d22" strokeWidth="1.500" /></svg>, text: "Constraints", w: "w-[16px]" },
  { pad: "pl-[29px]", icon: <svg width="16" height="9" viewBox="0 0 16 9"><path d="M0 1h5c3 0 5 2 6 5l-3 1C7 5 6 4 4 4H0z" fill="#5e8fb8" stroke="#234" /><path d="M12 1h4M12 6h4M14 1v5" stroke="#222" /></svg>, text: "Fixed Constraint:1", w: "w-[16px]" },
  { pad: "pl-[20px]", icon: <svg width="16" height="16" viewBox="0 0 16 16"><path d="M2 9l6-3 6 4-5 4z" fill="#e8e020" stroke="#222" /><path d="M2 9v3l7 4 5-3v-3l-5 4z" fill="#2c9c8a" stroke="#222" /><path d="M4 1l4 7" stroke="#22c" strokeWidth="2.500" /></svg>, text: "Loads", w: "w-[16px]" },
  { pad: "pl-[20px]", icon: <svg width="16" height="13" viewBox="0 0 16 13"><path d="M0 7h10v6H0z" fill="#a0a0a0" /><path d="M5.500 1.500h10v6h-10z" fill="#e11" stroke="#800" /></svg>, text: "Contacts", w: "w-[16px]" },
  { pad: "pl-[20px]", icon: <svg width="16" height="15" viewBox="0 0 16 15"><path d="M1 1h7v7h7v6H1z" fill="#5fa6c8" stroke="#1d4d80" /><path d="M1 4l7 3M3 1l3 13M1 11l7-5M8 14l4-6M9 9l6 4" stroke="#1d4d80" strokeWidth=".8" /></svg>, text: "Mesh", w: "w-[16px]" },
  { pad: "pl-[17px]", fold: true, icon: <Heat />, text: "Results", w: "w-[16px]" },
  { pad: "pl-[26px]", fold: true, icon: <Folder />, text: "Modal Frequency", w: "w-[16px]" },
];
const FREQ = ["40.01", "160.07", "311.53", "311.55", "592.82", "595.70", "634.46", "636.32", "778.25", "778.70", "949.73", "950.51", "1328.59", "1329.37", "1530.47", "1591.45"];

const Leaf = ({ text, checked }: { text: string; checked?: boolean }) =>
  checked ? (
    <div className="flex h-[18px] items-center pl-[46px]"><Check /><span className="w-[7px]" /><Heat /><span className="ml-[7px] whitespace-pre">{text}</span></div>
  ) : (
    <div className="flex h-[18px] items-center pl-[52px]"><Heat /><span className="ml-[6px] whitespace-pre">{text}</span></div>
  );

const Node = ({ n }: { n: (typeof NODES)[number] }) => (
  <div className={"flex h-[18px] items-center " + n.pad}>
    {n.fold !== undefined && <span className="mr-[6px] mt-[3px] w-[7px]"><Fold open={n.fold} /></span>}
    <span className={"mr-[2px] flex shrink-0 justify-center " + (n.fold === undefined ? "ml-[10px] " : "") + n.w}>{n.icon}</span>
    <span>{n.text}</span>
  </div>
);

const Browser = () => (
  <div className="flex h-[876px] w-[246px] shrink-0 flex-col border-t border-[#a0a0a0] bg-[#f0f0f0] pl-[3px] pr-[3px]">
    <div className="flex h-[35px] flex-col bg-[#f5f5f5]">
      <div className="flex h-[14px] items-center justify-end pr-[2px]"><svg width="8" height="8" viewBox="0 0 8 8"><path d="M.500.500l7 7M7.500.500l-7 7" stroke="#000" strokeWidth="1.500" /></svg></div>
      <div className="flex h-[21px] items-center pl-[8px] font-['DejaVu_Sans'] text-[11px] font-bold text-[#555] tracking-[-0.1px]">Study<Caret className="ml-[5px] text-[#777]" />
        <span className="ml-auto mr-px flex h-[13px] w-[13px] items-center justify-center rounded-full border border-[#999] text-[9px] font-normal text-[#888]">?</span></div>
    </div>
    <div className="flex-1 bg-white font-['DejaVu_Sans_Condensed','DejaVu_Sans',sans-serif] text-[11px] font-stretch-[90%] tracking-[0.050px] text-[#111]">
      <div className="flex h-[18px] items-center bg-[#ababab] pl-[12px]"><Cube /><span className="ml-[3px]">bell</span></div>
      {NODES.map((n) => <Node key={n.text + n.pad} n={n} />)}
      {FREQ.map((f, i) => <Leaf key={f} checked={i === 10} text={`F${i + 1}  ${f} Hz`} />)}
      <Node n={{ pad: "pl-[26px]", fold: true, icon: <Folder />, text: "Displacement", w: "w-[16px]" }} />
      <Leaf text="Displacement" checked /><Leaf text="X Displacement" /><Leaf text="Y Displacement" /><Leaf text="Z Displacement" />
    </div>
    <div className="-mx-[3px] h-[3px] border-b border-[#a0a0a0]" />
  </div>
);

/* ------------------------------------------------------------------ */
/* Inventor: finite element model                                       */
/* ------------------------------------------------------------------ */

const CX = 782;
const PROFILE: [number, number][] = [[100, 330], [120, 345], [170, 371], [275, 390], [375, 415], [500, 442], [620, 462], [775, 480], [900, 494], [980, 508], [1060, 548], [1140, 610], [1215, 665], [1255, 683], [1360, 690]];
const halfWidth = (y: number) => {
  for (let i = 1; i < PROFILE.length; i++) {
    const [y0, a] = PROFILE[i - 1], [y1, b] = PROFILE[i];
    if (y <= y1) return a + ((b - a) * (y - y0)) / (y1 - y0);
  }
  return 690;
};
const makeRandom = (seed: number) => () => ((seed = (seed * 16807) % 2147483647) / 2147483647);

function wireframe() {
  const r = makeRandom(77);
  const ys: number[] = [];
  for (let y = 118; y < 205; y += 24) ys.push(y);
  for (let y = 278; y < 1010; y += 59) ys.push(y);
  for (let y = 1050; y < 1380; y += 42) ys.push(y);
  const N = 25;
  const rows = ys.map((y, k) =>
    Array.from({ length: N + 1 }, (_, i) => {
      const t = ((i + (k % 2 ? 0.5 : 0)) / N - 0.5) * Math.PI;
      const edge = Math.abs(Math.sin(t));
      const j = 1 - edge;
      const sag = (1 - edge * edge) * (y < 500 ? -22 : (y - 500) * 0.05);
      return [CX + halfWidth(y) * Math.sin(t) + (r() - 0.5) * 34 * (0.2 + j), y + sag + (r() - 0.5) * (y < 210 ? 14 : 22)] as const;
    })
  );
  let d = "";
  const seg = (a: readonly [number, number], b: readonly [number, number]) => {
    d += `M${a[0].toFixed(0)} ${a[1].toFixed(0)}L${b[0].toFixed(0)} ${b[1].toFixed(0)}`;
  };
  rows.forEach((row, k) => {
    for (let i = 0; i < N; i++) {
      seg(row[i], row[i + 1]);
      const next = rows[k + 1];
      if (!next) continue;
      seg(row[i], next[i]);
      if (k % 2) seg(row[i], next[i + 1]);
      else seg(row[i + 1], next[i]);
    }
    if (rows[k + 1]) seg(row[N], rows[k + 1][N]);
  });
  return d;
}

/* Short segments that thicken the mesh where the elements are tiny. */
function dense() {
  const r = makeRandom(991);
  let d = "";
  const s = (x: number, y: number, dx: number, dy: number) => { d += `M${x.toFixed(0)} ${y.toFixed(0)}l${dx.toFixed(0)} ${dy.toFixed(0)}`; };
  for (let i = 0; i < 330; i++) s(565 + r() * 435, 78 + r() * 28, (r() - 0.5) * 22, (r() - 0.5) * 18);
  for (let i = 0; i < 170; i++) { const x = 415 + r() * 735; const e = Math.abs(x - CX) / 370; s(x, 110 + r() * 26 + e * 20, (r() - 0.5) * 46, (r() - 0.5) * 24); }
  for (const m of [-1, 1]) {
    for (let i = 0; i < 26; i++) { const u = r(); s(CX + m * (350 - u * 110), 165 + r() * 60, m * -(4 + r() * 22), 60 + r() * 70); }
    for (let i = 0; i < 90; i++) { const v = r(), y = 930 + v * 290, w = halfWidth(y); s(CX + m * (w - r() * (110 + v * 100)), y, -m * (26 + r() * 30), -(26 + r() * 26)); }
    for (let i = 0; i < 150; i++) { const x = 360 + r() * 315; s(CX + m * x, 1200 + r() * 40, m * (r() * 24), (r() - 0.5) * 18); }
    for (let i = 0; i < 110; i++) s(CX + m * (400 + r() * 280), 1240 + r() * 90, m * (20 + r() * 36), -(r() * 16) + 4);
    for (let i = 0; i < 60; i++) { const y = 300 + r() * 650; s(CX + m * (halfWidth(y) - r() * 12), y, m * -(r() * 10), 25 + r() * 30); }
    for (let i = 0; i < 26; i++) { const y = 360 + r() * 330; s(CX + m * (214 + r() * 14), y, m * (r() - 0.5) * 10, 36 + r() * 26); }
  }
  for (let i = 0; i < 260; i++) { const x = (r() - 0.5) * 600; s(CX + x, 1275 + r() * (66 - (x * x) / 1700), (r() - 0.5) * 24, (r() - 0.5) * 20); }
  return d;
}

const SIDE_LOBES = [-1, 1];

const OUTLINE = "M575 76H990L1000 102L1105 114Q1140 122 1150 175L1170 275L1200 375L1225 500L1245 620L1262 775L1275 900L1290 980Q1320 1060 1400 1140Q1440 1190 1458 1222Q1475 1262 1440 1312Q1400 1345 1340 1342Q1270 1336 1130 1285Q980 1342 780 1342Q580 1340 430 1285Q300 1342 230 1340Q130 1325 97 1262Q96 1225 165 1146Q260 1050 280 960L295 860L305 720L325 590L350 450L375 360L405 250L413 165Q424 122 455 115L565 102Z";

const Bell = () => (
  <svg width="540" height="480" viewBox="0 0 1568 1440" preserveAspectRatio="none">
    <defs>
      <clipPath id="bell"><path d={OUTLINE} /></clipPath>
      <filter id="soft" x="-50%" y="-50%" width="200%" height="200%"><feGaussianBlur stdDeviation="9" /></filter>
      <radialGradient id="main">
        <stop offset="0" stopColor="#ff1200" /><stop offset=".2" stopColor="#ff2a00" /><stop offset=".33" stopColor="#ff7a00" /><stop offset=".46" stopColor="#ff0" /><stop offset=".58" stopColor="#5f0" /><stop offset=".7" stopColor="#00ff28" /><stop offset=".82" stopColor="#00fff0" /><stop offset=".9" stopColor="#009cff" /><stop offset="1" stopColor="#00f" stopOpacity="0" />
      </radialGradient>
      <radialGradient id="side" fx=".74">
        <stop offset="0" stopColor="#ff2400" /><stop offset=".2" stopColor="#ff5a00" /><stop offset=".34" stopColor="#ffc800" /><stop offset=".44" stopColor="#df0" /><stop offset=".6" stopColor="#2f0" /><stop offset=".72" stopColor="#00ff60" /><stop offset=".83" stopColor="#00f0ff" /><stop offset=".92" stopColor="#0080ff" /><stop offset="1" stopColor="#00f" stopOpacity="0" />
      </radialGradient>
      <radialGradient id="lip">
        <stop offset="0" stopColor="#00ff38" /><stop offset=".35" stopColor="#00ff80" /><stop offset=".6" stopColor="#00f4ff" /><stop offset=".8" stopColor="#0080ff" /><stop offset="1" stopColor="#00f" stopOpacity="0" />
      </radialGradient>
    </defs>
    <g clipPath="url(#bell)">
      <rect width="1568" height="1440" fill="#0000ff" />
      <ellipse cx="782" cy="1060" rx="130" ry="180" fill="#0070ff" filter="url(#soft)" />
      {SIDE_LOBES.map((m) => (
        <g key={m} transform={m < 0 ? undefined : "translate(1564 0) scale(-1 1)"}>
          <path d="M392 300Q330 520 318 640Q300 800 296 900" fill="none" stroke="#00c8ff" strokeWidth="62" filter="url(#soft)" />
          <path d="M362 400Q332 560 318 700Q305 800 300 880" fill="none" stroke="#1cff20" strokeWidth="36" filter="url(#soft)" />
          <path d="M404 300Q380 560 345 760Q330 900 300 980" fill="none" stroke="#0000ff" strokeWidth="22" filter="url(#soft)" />
          <ellipse cx="484" cy="610" rx="104" ry="415" fill="url(#side)" transform="rotate(9 484 610)" />
          <ellipse cx="345" cy="1030" rx="80" ry="150" fill="#1490ff" opacity=".85" transform="rotate(28 345 1030)" filter="url(#soft)" />
          <ellipse cx="215" cy="1200" rx="195" ry="140" fill="url(#lip)" transform="rotate(-24 215 1200)" />
        </g>
      ))}
      <ellipse cx="778" cy="592" rx="186" ry="440" fill="url(#main)" />
      <ellipse cx="782" cy="1335" rx="300" ry="215" fill="url(#lip)" />
      <path d={wireframe()} stroke="#000" strokeWidth="1" fill="none" vectorEffect="non-scaling-stroke" shapeRendering="crispEdges" />
      {SIDE_LOBES.map((m) => (
        <g key={m} transform={m < 0 ? undefined : "translate(1564 0) scale(-1 1)"}>
          <path d="M95 1250Q160 1215 260 1238Q350 1258 430 1285Q330 1345 230 1345Q120 1330 95 1262Z" fill="#0018f0" />
          <ellipse cx="250" cy="1325" rx="170" ry="58" fill="url(#lip)" />
          <ellipse cx="330" cy="1280" rx="90" ry="28" fill="#0af" filter="url(#soft)" />
          <path d="M98 1244Q160 1216 260 1238Q350 1258 440 1288" fill="none" stroke="#000" strokeWidth="10" />
        </g>
      ))}
      <path d={dense()} stroke="#000" strokeWidth="1" fill="none" vectorEffect="non-scaling-stroke" shapeRendering="crispEdges" />
      <path d="M403 250L400 420Q370 620 345 760T290 960M1164 250L1176 440Q1195 640 1215 760T1280 960" stroke="#4a3a44" strokeWidth="4" fill="none" />
    </g>
    <path d="M565 104Q780 92 1000 104" stroke="#000" strokeWidth="9" fill="none" />
    <path d={OUTLINE} fill="none" stroke="#000" strokeWidth="4" />
    <path d="M104 1279H1460M104 1285H1460" stroke="#3f2f2c" strokeWidth="3" />
  </svg>
);

const NavBar = () => (
  <div className="flex h-[197px] w-[33px] flex-col items-center rounded-[4px] border-2 border-[#3d4350] bg-[#7b7f89] pt-[2px] text-[#555a66]">
    <span className="mr-[1px] flex h-[8px] w-[8px] items-center justify-center self-end rounded-full bg-[#4f545f] text-[7px] leading-none text-white">×</span>
    <svg width="22" height="22" viewBox="0 0 22 22" className="mt-[10px]"><path d="M11 1h10v10A10 10 0 1 1 11 1z" fill="#c3c5cb" stroke="#6b6f79" /><circle cx="11" cy="11" r="5.500" fill="#b4b7be" stroke="#666a75" strokeWidth="1.500" /></svg>
    <Caret className="mt-[10px] w-[5px] text-[#50545e]" />
    <span className="mt-[4px] h-px w-[26px] shrink-0 bg-[#5f636d]" />
    <svg width="16" height="17" viewBox="0 0 16 17" className="mt-[6px]"><path d="M4 10L1 7l1-1 3 2-1-6h1.500l1 4L7 1h1.500v5L10 1.500h1.500L11 7l2-4 1.500.5L13 10c0 3-1 5-2 6H6c-1-2-1-4-2-6z" fill="#dcdde1" stroke="#5a5e69" strokeWidth=".8" /></svg>
    <svg width="16" height="16" viewBox="0 0 16 16" className="mt-[8px]"><circle cx="7" cy="6.500" r="5.500" fill="#a9acb4" stroke="#e0e1e5" strokeWidth="1.500" /><path d="M5 4h3l1 1v4H5z" fill="#eee" stroke="#555" strokeWidth=".7" /><path d="M11 10l4 5" stroke="#555" strokeWidth="2" /></svg>
    <Caret className="mt-[8px] w-[5px] text-[#50545e]" />
    <svg width="16" height="16" viewBox="0 0 16 16" fill="none" stroke="#5b606b" strokeWidth="1.200" className="mt-[6px]"><ellipse cx="7" cy="8" rx="3.500" ry="7.500" /><path d="M15 5c2 5-14 6-14 3 0-2 6-3 12-2M9 5h3M10.500 3.500v3" /></svg>
    <Caret className="mt-[7px] w-[5px] text-[#50545e]" />
    <svg width="16" height="14" viewBox="0 0 16 14" className="mt-[8px]"><path d="M.500 4.500h15v9H.500z" fill="#d3d5d9" stroke="#555a66" /><path d="M3.500 7.500h9v3h-9z" fill="none" stroke="#555a66" /><path d="M2 4l9-4v4" fill="none" stroke="#555a66" /></svg>
    <span className="mb-[3px] mr-[1px] mt-auto flex h-[8px] w-[8px] items-center justify-center self-end rounded-full bg-[#4f545f]"><Caret className="w-[4px] text-white" /></span>
  </div>
);

const SCALE = ["43.68", "32.76", "21.84", "10.92"];

const Viewport = () => (
  <div className="relative h-[876px] flex-1 overflow-hidden bg-[linear-gradient(180deg,#76869f_0%,#8894ab_20%,#99a2b5_38%,#9aa3b5_50%,#a6abb7_66%,#b8bac1_82%,#c8c9cc_100%)]">
    <div className="absolute inset-0 bg-[linear-gradient(90deg,rgba(43,48,62,0.92)_0%,rgba(46,53,70,0.66)_9%,rgba(52,62,82,0.36)_16%,rgba(60,72,95,0.1)_24%,transparent_32%,transparent_70%,rgba(60,72,95,0.14)_78%,rgba(52,62,82,0.42)_85%,rgba(46,53,70,0.7)_92%,rgba(43,48,62,0.95)_100%)] [mask-image:linear-gradient(180deg,#000_0%,rgba(0,0,0,0.86)_40%,rgba(0,0,0,0.5)_66%,rgba(0,0,0,0.2)_86%,rgba(0,0,0,0.1)_100%)]" />
    <div className="relative flex h-full">
      <div className="ml-[19px] mt-[5px] font-['DejaVu_Sans'] text-[13px] text-white tracking-[-0.1px]">
        <div className="flex h-[98px] flex-col justify-between whitespace-nowrap leading-[19px]">
          <span>Nodes:37857</span><span>Elements:21346</span><span>Type: Displacement</span><span>Unit:&nbsp; mm</span><span>9/30/2016, 11:33:25 AM</span>
        </div>
        <div className="mt-[16px] flex">
          <div className="flex h-[438px] w-[21px] flex-col border border-[#111] bg-[linear-gradient(#a80000,#a85400_14%,#a8a800_25%,#00a800_50%,#00a8a8_75%,#0058a8_86%,#0000a8_98%)]">
            <span className="flex-1 border-b border-[#111]" /><span className="flex-1 border-b border-[#111]" /><span className="flex-1 border-b border-[#111]" /><span className="flex-1 border-b border-[#111]" /><span className="flex-1" />
          </div>
          <div className="-mt-[14px] ml-[9px] flex h-[456px] flex-col justify-between leading-[18px]">
            <span>54.6 Max</span>{SCALE.map((s) => <span key={s}>{s}</span>)}<span>0 Min</span>
          </div>
        </div>
        <svg width="60" height="56" viewBox="0 0 60 56" className="ml-[20px] mt-[221px]">
          <path d="M13 43V19" stroke="#0a9a0a" /><path d="M13 9l5 10H8z" fill="#0b9a12" /><path d="M13 44h20" stroke="#a01010" /><path d="M43 44l-10-5v10z" fill="#a80808" /><circle cx="13" cy="44" r="5.500" fill="#0808c0" stroke="#023" />
          <path d="M46 39.500l5 9M51 39.500l-5 9" stroke="#f02020" strokeWidth="1.300" /><path d="M10.500 0l2.500 4v4M15.500 0L13 4" stroke="#1de01d" strokeWidth="1.300" fill="none" />
        </svg>
      </div>
    </div>
    <div className="absolute left-[554px] top-[200px]"><Bell /></div>
    <div className="absolute right-[1px] top-[7px] flex items-center gap-[8px] text-white">
      <svg width="12" height="12" viewBox="0 0 12 12"><path d="M0 8h12" stroke="#fff" strokeWidth="3" /></svg>
      <svg width="11" height="11" viewBox="0 0 11 11"><path d="M3 2V1h7v7H9M1 3h7v7H1z" fill="none" stroke="#fff" strokeWidth="1.800" /></svg>
      <svg width="10" height="10" viewBox="0 0 10 10"><path d="M1 1l8 8M9 1L1 9" stroke="#fff" strokeWidth="2.500" /></svg>
    </div>
    <div className="absolute right-[35px] top-[59px] flex h-[54px] w-[54px] items-center justify-center border border-[#5b5f69] bg-[#868a94] shadow-[0_5px_5px_-2px_rgba(25,30,40,0.6)]">
      <div className="flex h-[34px] w-[34px] items-center justify-center bg-[#7b808c] font-['Open_Sans'] text-[12px] font-bold tracking-[-0.3px] text-[#4c505c]">FRONT</div>
    </div>
    <div className="absolute right-[1px] top-[145px]"><NavBar /></div>
    <div className="absolute bottom-[30px] right-0 flex h-[48px] w-[48px] items-center justify-center border border-[#a5a5a5] bg-[#fafafa]">
      <svg width="28" height="32" viewBox="0 0 28 32"><path d="M14 0l14 8v16l-14 8L0 24V8z" fill="#3f93e0" /><path d="M14 0l14 8-6 4-8-4-8 4-6-4z" fill="#8fc8fa" /><path d="M0 8l6 4v9l8 4v7L0 24z" fill="#56aaf0" /><path d="M18 11l-9 6 9 5" stroke="#fff" strokeWidth="2" fill="none" /><circle cx="18" cy="11" r="2.600" fill="#fff" /><circle cx="9" cy="17" r="2.600" fill="#fff" /><circle cx="18" cy="22" r="2.600" fill="#fff" /></svg>
    </div>
  </div>
);

const Inventor = () => (
  <div className="flex h-[1040px] w-[1920px] shrink-0 flex-col font-['Open_Sans',sans-serif] text-[11.500px] leading-[15px] tracking-[-0.25px]">
    <div className="bg-[#505050]"><TitleBar /><TabRow /></div>
    <Ribbon />
    <div className="flex"><Browser /><Viewport /></div>
    <div className="flex h-[24px] items-center bg-[#f5f5f5] pl-px text-[#111]">
      <span className="flex-1">Ready</span>
      <span className="h-[21px] w-[40px] border-l border-[#ccc] pl-[9px] pt-[2px]">1</span>
      <span className="h-[21px] w-[39px] border-x border-[#ccc] pl-[7px] pt-[2px]">1</span>
    </div>
  </div>
);

/* ------------------------------------------------------------------ */
/* Chrome                                                               */
/* ------------------------------------------------------------------ */

const BmFolder = () => <svg width="16" height="14" viewBox="0 0 16 14" className="mr-[6px]"><path d="M.500 3V1.500h5l1 1.500h9v10.500H.500z" fill="#fbd38a" stroke="#b8862e" /></svg>;
const BmPage = () => <svg width="11" height="14" viewBox="0 0 11 14" className="mr-[8px]"><path d="M.700.700h6l3.600 3.600v9H.700zM6.700.700v3.600h3.600" fill="#fff" stroke="#555" strokeWidth="1.200" /></svg>;
const APP_DOTS = ["bg-[#ea4335]", "bg-[#ea4335]", "bg-[#ea4335]", "bg-[#34a853]", "bg-[#4285f4]", "bg-[#fbbc05]", "bg-[#34a853]", "bg-[#fbbc05]", "bg-[#fbbc05]"];
const fade = "whitespace-nowrap [mask-image:linear-gradient(90deg,#000_82%,rgba(0,0,0,0.2))]";

const ChromeTop = () => (
  <div className="font-['Open_Sans',sans-serif] text-[11.500px] tracking-[-0.25px] text-[#222]">
    <div className="relative flex h-[29px] border-b border-[#b4b4b4]">
      <svg width="236" height="29" viewBox="0 0 236 29" className="absolute left-0 top-0"><path d="M0 24L10 1H191L203 29H0z" fill="#f1f1f1" /><path d="M0 24L10 .500H191L203 28.500" fill="none" stroke="#b0b0b0" /><path d="M201 7h28q2 0 2.500 2l4 13q0 2-2 2h-25q-2 0-2.500-2z" fill="#d9d9d9" stroke="#c4c4c4" /></svg>
      <div className="relative flex h-full items-center pl-[14px]">
        <span className="flex h-[16px] w-[16px] items-end justify-center rounded-[2px] border-t-2 border-[#aaa] bg-[#3a6fe0] text-[9px] font-bold leading-[12px] text-white">30</span>
        <span className={"ml-[6px] w-[131px] " + fade}>Google Calendar - Week</span>
        <svg width="9" height="9" viewBox="0 0 9 9" className="ml-[10px]"><path d="M1 1l7 7M8 1L1 8" stroke="#555" strokeWidth="1.500" /></svg>
      </div>
      <div className="ml-auto flex items-start pr-[20px]">
        <span className="mr-[25px] flex h-[19px] w-[49px] items-center justify-center bg-[#adadad] text-white [text-shadow:0_0_2px_#333]">Keiran</span>
        <svg width="101" height="12" viewBox="0 0 101 12" fill="none" stroke="#888" className="mt-[7px]"><path d="M0 6.500h10M47.500 3.500V.500h7v8h-2M45.500 3.500h7v8h-7zM91 1l10 10M101 1L91 11" /></svg>
      </div>
    </div>
    <div className="flex h-[36px] items-center bg-[#f1f1f1] pl-[2px]">
      <svg width="15" height="14" viewBox="0 0 15 14"><path d="M15 7H2M8 1L2 7l6 6" stroke="#444" strokeWidth="2" fill="none" /></svg>
      <svg width="15" height="14" viewBox="0 0 15 14" className="ml-[13px]"><path d="M0 7h13M7 1l6 6-6 6" stroke="#ccc" strokeWidth="2" fill="none" /></svg>
      <svg width="16" height="15" viewBox="0 0 16 15" className="ml-[13px]"><path d="M13 3.500A6 6 0 1 0 14 9" stroke="#444" strokeWidth="2.200" fill="none" /><path d="M15 0v6H9z" fill="#444" /></svg>
      <div className="ml-[10px] flex h-[28px] w-[1760px] items-center rounded-[3px] border border-[#a9a9a9] bg-white pl-[9px] pr-[6px] text-[13.500px] tracking-[-0.1px]">
        <svg width="10" height="12" viewBox="0 0 10 12" className="mr-[9px]"><path d="M1 5h8v7H1z" fill="#0b8043" /><path d="M3 5V3a2 2 0 0 1 4 0v2" stroke="#0b8043" strokeWidth="1.500" fill="none" /></svg>
        <span className="text-[#0b8043]">https</span><span className="text-[#777]">://</span><span>calendar.google.com</span><span className="text-[#777]">/calendar/render?tab=mc#main_7</span>
        <svg width="14" height="12" viewBox="0 0 14 12" className="ml-auto mr-[8px]"><path d="M5 0L0 6l5 6M9 0l5 6-5 6" fill="#999" /><path d="M7 0l4 6-4 6-4-6z" fill="#444" /></svg>
        <svg width="15" height="14" viewBox="0 0 15 14"><path d="M7.500 1l2 4.300 4.500.3-3.400 3 1.100 4.600L7.500 10.700 3.300 13.200l1.100-4.600L1 5.600l4.500-.3z" fill="none" stroke="#555" strokeWidth="1.300" /></svg>
      </div>
      <svg width="15" height="15" viewBox="0 0 15 15" className="ml-[11px]"><path d="M1 1h4l2.500 5L10 1h4L9.500 9v5h-4V9z" fill="#1673d1" stroke="#bcd" strokeWidth=".6" /></svg>
      <svg width="3" height="14" viewBox="0 0 3 14" className="ml-[24px]"><path d="M0 0h3v3H0zM0 5h3v3H0zM0 10h3v3H0z" fill="#444" /></svg>
    </div>
    <div className="flex h-[25px] items-center border-b border-[#b4b4b4] bg-[#f1f1f1] pb-[6px] pl-[3px]">
      <span className="mr-[7px] grid w-[13px] grid-cols-3 gap-[2px]">{APP_DOTS.map((c, i) => <i key={i} className={"h-[3px] w-[3px] " + c} />)}</span>
      <span className="w-[39px]">Apps</span>
      <BmFolder /><span className="w-[50px]">Chimes</span>
      <svg width="16" height="16" viewBox="-8 -8 16 16" className="mr-[6px]"><path d="M0-8l2 3 4-2-1 4 3 3-3 3 1 4-4-2-2 3-2-3-4 2 1-4-3-3 3-3-1-4 4 2z" fill="#f4701c" /><path d="M-3-1h6M-3 1.500h6" stroke="#fff" /></svg>
      <span className={"mr-[13px] w-[117px] tracking-[-0.200px] " + fade}>Wolfram|Alpha: Comp</span>
      <BmFolder /><span className="w-[103px]">Online software</span>
      <BmPage /><span className={"mr-[15px] w-[117px] " + fade}>VHF Propagation Map</span>
      <BmPage /><span className={"w-[120px] " + fade}>The Softrock lite II and</span>
    </div>
  </div>
);

const GoogleBar = () => (
  <div className="flex h-[60px] items-center bg-[#f1f1f1] pl-[22px]">
    <div className="-mt-[4px] w-[174px] font-['Lato'] text-[31px] font-semibold leading-none tracking-[-1.100px]">
      <span className="text-[#4285f4]">G</span><span className="text-[#ea4335]">o</span><span className="text-[#fbbc05]">o</span><span className="text-[#4285f4]">g</span><span className="text-[#34a853]">l</span><span className="text-[#ea4335]">e</span>
    </div>
    <div className="flex h-[30px] w-[590px] items-center justify-between border border-[#c6c6c6] bg-white pb-[2px] pl-[8px] pr-[6px] text-[16px] text-[#999]">Search Calendar<Caret className="w-[6px] text-[#888]" /></div>
    <div className="flex h-[30px] w-[60px] items-center justify-center rounded-r-[2px] bg-[#4688f1]">
      <svg width="14" height="14" viewBox="0 0 14 14"><circle cx="5.500" cy="5.500" r="4" fill="none" stroke="#fff" strokeWidth="2.200" /><path d="M8.500 8.500l5 5" stroke="#fff" strokeWidth="2.600" /></svg>
    </div>
    <div className="ml-auto flex items-center pr-[29px]">
      <span className="grid w-[16px] grid-cols-3 gap-[2px]">{APP_DOTS.map((_, i) => <i key={i} className="h-[4px] w-[4px] bg-[#666]" />)}</span>
      <span className="ml-[27px] flex h-[20px] w-[20px] items-center justify-center rounded-full bg-[#666]"><svg width="10" height="11" viewBox="0 0 10 11"><path d="M5 0c3 1 3.500 3 3.500 6L10 8.500H0L1.500 6C1.500 3 2 1 5 0zM4 9.500h2V11H4z" fill="#fff" /></svg></span>
      <span className="ml-[19px] flex h-[32px] w-[32px] items-center justify-center rounded-full bg-[#ab47bc] font-['Roboto'] text-[16px] text-white">K</span>
    </div>
  </div>
);

const btn = "flex h-[29px] items-center justify-center border border-[#dcdcdc] bg-gradient-to-b from-[#f5f5f5] to-[#f1f1f1] text-[11px] font-bold text-[#444]";

const CalToolbar = () => (
  <div className="flex h-[48px] items-center border-b border-[#ebebeb] pl-[22px] pr-[28px]">
    <span className="w-[154px] text-[20px] text-[#dd4b39] tracking-[-0.1px]">Calendar</span>
    <span className={btn + " w-[72px] rounded-[2px] font-bold !text-[#b8b8b8]"}>Today</span>
    <span className={btn + " ml-[16px] w-[34px] rounded-l-[2px]"}><svg width="8" height="12" viewBox="0 0 8 12"><path d="M7 1L2 6l5 5" stroke="#555" strokeWidth="2.200" fill="none" /></svg></span>
    <span className={btn + " -ml-px w-[34px] rounded-r-[2px]"}><svg width="8" height="12" viewBox="0 0 8 12"><path d="M1 1l5 5-5 5" stroke="#555" strokeWidth="2.200" fill="none" /></svg></span>
    <span className="ml-[20px] text-[13px] text-[#222]">Sep 25 – Oct 1, 2016</span>
    <div className="ml-auto flex">
      <span className={btn + " w-[72px] rounded-l-[2px]"}>Day</span>
      <span className={btn + " -ml-px w-[72px] border-[#ccc] from-[#eaeaea] to-[#dedede] !text-[#222] shadow-[inset_0_1px_2px_rgba(0,0,0,0.12)]"}>Week</span>
      <span className={btn + " -ml-px w-[72px]"}>Month</span>
      <span className={btn + " -ml-px w-[72px]"}>4 Days</span>
      <span className={btn + " -ml-px w-[73px] rounded-r-[2px]"}>Agenda</span>
      <span className={btn + " ml-[16px] w-[72px] gap-[4px] rounded-[2px]"}>More <Caret className="text-[#555]" /></span>
      <span className={btn + " ml-[16px] w-[72px] gap-[5px] rounded-[2px]"}>
        <svg width="18" height="18" viewBox="0 0 18 18"><circle cx="9" cy="9" r="5" fill="none" stroke="#666" strokeWidth="3.600" /><path d="M9 0v3M9 15v3M1.200 4.500l2.600 1.500M14.200 12l2.600 1.500M1.200 13.500L3.800 12M14.200 6l2.600-1.500" stroke="#666" strokeWidth="3.600" /></svg>
        <Caret className="text-[#555]" /></span>
    </div>
  </div>
);

/* ------------------------------------------------------------------ */
/* Calendar sidebar                                                     */
/* ------------------------------------------------------------------ */

const MONTH: string[][] = [
  ["28", "29b", "30b", "31b", "1", "2", "3"],
  ["4", "5", "6", "7", "8", "9", "10"],
  ["11", "12", "13", "14", "15", "16", "17n"],
  ["18n", "19", "20", "21", "22", "23", "24"],
  ["25", "26", "27", "28", "29", "30t", "1b"],
  ["2b", "3b", "4b", "5b", "6b", "7b", "8b"],
];
const dayClass = (c: string, row: number, col: number) => {
  if (row === 0 && col === 0) return "text-[#aaa]";
  if (c.endsWith("n")) return "text-[#444]";
  if (c.endsWith("t")) return "font-bold text-[#222] outline outline-1 -outline-offset-1 outline-[#222]";
  if (c.endsWith("b")) return "font-bold text-[#aaa]";
  return "font-bold text-[#222]";
};

const CALS: { c: string; t: string; on?: boolean }[] = [
  { c: "bg-[#fa3c24] border-[#fa3c24]", t: "canti021@umn.edu", on: true },
  { c: "bg-[#b99aff] border-[#b99aff]", t: "Karen Ortega", on: true },
  { c: "bg-[#fbe983] border-[#fbe983]", t: "linx0880@umn.edu", on: true },
  { c: "border-[#ddd]", t: "Chimes Summer '12" },
  { c: "border-[#ddd]", t: "Holidays in United St..." },
  { c: "border-[#ddd]", t: "In Town" },
  { c: "border-[#ddd]", t: "KKC & RLO" },
  { c: "border-[#ddd]", t: "kkc72@cornell.edu" },
  { c: "border-[#ddd]", t: "pmarchet@umn.edu" },
];

const MenuBox = () => <span className="mr-[9px] ml-auto flex h-[13px] w-[13px] items-center justify-center border border-[#aaa]"><Caret className="text-[#555]" /></span>;
const Arrow = ({ d }: { d: string }) => <svg width="8" height="8" viewBox="0 0 8 8" className="mr-[6px]"><path d={d} fill="#555" /></svg>;
const DOWN = "M1 3h7L4.500 6.500z";

const CalSidebar = () => (
  <div className="flex w-[176px] shrink-0 flex-col text-[13px] text-[#222]">
    <div className="ml-[22px] mt-[10px] flex h-[29px] w-[92px] rounded-[2px] border border-[#c53727] bg-[#d84a38] text-[11px] font-bold text-white">
      <span className="flex flex-1 items-center justify-center border-r border-[#c53727]">CREATE</span>
      <span className="flex w-[20px] items-center justify-center"><svg width="9" height="8" viewBox="0 0 9 8"><path d="M0 0h9L4.500 8z" fill="#fff" /></svg></span>
    </div>
    <div className="ml-[8px] mt-[16px] flex h-[17px] items-center"><Arrow d={DOWN} />September 2016
      <svg width="25" height="8" viewBox="0 0 25 8" className="-mt-[3px] ml-auto mr-[8px]"><path d="M5 .500L1.500 4 5 7.500M20 .500L23.500 4 20 7.500" fill="none" stroke="#777" strokeWidth="1.400" /></svg></div>
    <div className="ml-[22px] mt-[6px] w-[150px] text-center text-[12px]">
      <div className="grid h-[19px] grid-cols-7 items-center text-[11px] text-[#444]">{["S", "M", "T", "W", "T", "F", "S"].map((d, i) => <span key={i}>{d}</span>)}</div>
      {MONTH.map((row, r) => (
        <div key={r} className={"grid h-[19px] grid-cols-7 leading-[19px] " + (r === 4 ? "bg-[#eee]" : "")}>
          {row.map((c, i) => <span key={i} className={dayClass(c, r, i)}>{parseInt(c)}</span>)}
        </div>
      ))}
    </div>
    <div className="ml-[8px] mt-[23px] flex h-[19px] items-center"><Arrow d="M2 0.500v7L6 4z" />My calendars<MenuBox /></div>
    <div className="ml-[8px] mt-[15px] flex h-[19px] items-center"><Arrow d={DOWN} />Other calendars<MenuBox /></div>
    <div className="ml-[22px] mt-[8px] flex h-[22px] w-[145px] items-center border border-[#d0d0d0] pl-[8px] text-[11px] text-[#999]">Add a friend's calendar</div>
    <div className="mt-[2px]">
      {CALS.map((c) => (
        <div key={c.t} className={"ml-[22px] flex h-[30px] items-center text-[12px] tracking-[0.100px] " + (c.on ? "text-[#222]" : "text-[#555]")}>
          <span className={"mr-[5px] h-[13px] w-[13px] rounded-[1px] border " + c.c} />{c.t}
        </div>
      ))}
    </div>
    <div className="ml-[41px] mt-auto flex h-[24px] items-center gap-[3px] text-[11px] text-[#777]"><u>Terms</u> - <u>Privacy</u></div>
  </div>
);

/* ------------------------------------------------------------------ */
/* Week grid                                                            */
/* ------------------------------------------------------------------ */

const DAYS = ["Sun 9/25", "Mon 9/26", "Tue 9/27", "Wed 9/28", "Thu 9/29", "Fri 9/30", "Sat 10/1"];
const HOURS = ["5am", "6am", "7am", "8am", "9am", "10am", "11am", "12pm", "1pm", "2pm", "3pm", "4pm", "5pm", "6pm", "7pm", "8pm", "9pm", "10pm", "11pm"];

const TONES = {
  y: "bg-[#fdf7dc] text-[#7d7d78] bg-[repeating-linear-gradient(135deg,transparent_0_10px,rgba(255,255,255,0.4)_10px_18px)]",
  p: "bg-[#eae2ff] text-[#76727f] bg-[repeating-linear-gradient(135deg,transparent_0_10px,rgba(255,255,255,0.25)_10px_18px)]",
  P: "bg-[#b99aff] text-[#1d1d1d] bg-[repeating-linear-gradient(135deg,transparent_0_10px,rgba(255,255,255,0.15)_10px_18px)]",
  r: "bg-[#f6c9c2] text-[#7f6c6a] border border-[#fa7564]",
};

type Ev = { day: number; from: number; h: number; left?: number; w?: number; tone: keyof typeof TONES; time: string; title: string; where?: string; halo?: boolean; reply?: boolean };
const EVENTS: Ev[] = [
  { day: 0, from: 10, h: 40, tone: "y", time: "10 – 11", title: "busy" },
  { day: 1, from: 13.42, h: 33, w: 188, tone: "p", time: "1:25p – 2:15p", title: "Mandarin (CHN 1011)" },
  { day: 1, from: 15, h: 82, w: 188, tone: "y", time: "3p – 5p", title: "busy" },
  { day: 1, from: 13.92, h: 82, left: 112, w: 110, tone: "r", time: "1:55p – 3:55p", title: "BBE 8001", where: "Green Hall 203, Cleveland Avenue North, Falcon Heights, MN, United States", halo: true },
  { day: 2, from: 11.75, h: 50, tone: "p", time: "11:45 – 1p", title: "Limnology (EEB 5601)", where: "Hodson Hall 495 (STP)" },
  { day: 2, from: 13.42, h: 33, tone: "p", time: "1:25p – 2:15p", title: "Mandarin (CHN 1011)" },
  { day: 2, from: 14.5, h: 51, tone: "p", time: "2:30p – 3:45p", title: "Water Chemistry (CEGE 5541)", where: "Civil Engineering 205 (MIN)" },
  { day: 2, from: 17.25, h: 103, tone: "r", time: "5:15p – 7:45p", title: "CEGE 8601", where: "SAFL, Minneapolis, MN, United States" },
  { day: 3, from: 10, h: 40, w: 73, tone: "r", time: "10 – 11", title: "Lab Meeting", where: "BioAgEng-225", reply: true },
  { day: 3, from: 10, h: 40, left: 75, w: 72, tone: "p", time: "10 – 11", title: "Lab Meeting" },
  { day: 3, from: 10, h: 40, left: 149, w: 74, tone: "y", time: "10 – 11", title: "busy" },
  { day: 3, from: 11.5, h: 61, tone: "y", time: "11:30 – 1p", title: "busy" },
  { day: 3, from: 13.42, h: 33, tone: "p", time: "1:25p – 2:15p", title: "Mandarin (CHN 1011)" },
  { day: 3, from: 15, h: 82, tone: "y", time: "3p – 5p", title: "busy" },
  { day: 4, from: 11.75, h: 50, tone: "p", time: "11:45 – 1p", title: "Limnology (EEB 5601)", where: "Hodson Hall 495 (STP)" },
  { day: 4, from: 13.42, h: 33, tone: "p", time: "1:25p – 2:15p", title: "Mandarin (CHN 1011)" },
  { day: 4, from: 14.5, h: 51, tone: "p", time: "2:30p – 3:45p", title: "Water Chemistry (CEGE 5541)", where: "Civil Engineering 205 (MIN)" },
  { day: 5, from: 13.42, h: 33, tone: "P", time: "1:25p – 2:15p", title: "Mandarin (CHN 1011)" },
  { day: 5, from: 15, h: 37, tone: "P", time: "3p – 3:55p", title: "Water Resource Seminar" },
];
const DAY_W = 232.8;

const Event = ({ e }: { e: Ev }) => (
  <div
    className={"absolute overflow-hidden " + TONES[e.tone] + (e.halo ? " shadow-[0_0_0_2px_#fff]" : "")}
    style={{ left: Math.round(e.day * DAY_W - 1) + (e.left ?? 0), top: Math.round((e.from - 5) * 42), width: e.w ?? 222, height: e.h }}
  >
    <div className={"text-[10px] " + (e.tone === "r" ? "pl-[4px] pt-[1px]" : "pl-[5px] pt-[2px]")}>
      <div className="flex items-center whitespace-nowrap font-bold leading-[11px]">
        {e.reply && <svg width="10" height="8" viewBox="0 0 10 8" className="mr-[4px]"><path d="M0 3l4-3v2c4 0 6 2 6 6-1-2-3-3-6-3v2z" fill="currentColor" /></svg>}
        {e.time}
      </div>
      <div className="whitespace-nowrap text-[12px] leading-[12px] tracking-[-0.050px]">{e.title}</div>
      {e.where && <div className={"mt-px leading-[12px] tracking-[0.150px] " + (e.w && e.w < 80 ? "whitespace-nowrap" : e.halo ? "w-[94px]" : "")}>{e.where}</div>}
    </div>
  </div>
);

const WeekGrid = () => (
  <div className="flex flex-1 flex-col text-[12px] text-[#666]">
    <div className="flex">
      <div className="flex h-[46px] w-[60px] items-end justify-end pr-[10px] text-[11px]">GMT-05</div>
      <div className="mt-[10px] w-[1630px]">
        <div className="grid h-[23px] grid-cols-7 text-center leading-[23px]">
          {DAYS.map((d, i) => <span key={d} className={i === 5 ? "border-x border-t border-[#ddd] bg-[#f0f0f0] font-bold leading-[22px] text-[#222]" : ""}>{d}</span>)}
        </div>
        <div className="grid h-[13px] grid-cols-7 border-y border-l border-[#ddd]">
          {DAYS.map((d, i) => <span key={d} className={"border-r border-[#ddd] " + (i === 5 ? "bg-[#f0f0f0]" : "")} />)}
        </div>
      </div>
    </div>
    <div className="mt-[4px] flex h-[791px]">
      <div className="relative flex h-full w-[1689px] overflow-hidden border-b border-l border-[#ddd]">
        <div className="w-[59px] shrink-0 border-r border-[#ddd]">
          {HOURS.map((h) => <div key={h} className="h-[42px] border-t border-[#ddd] pr-[2px] text-right leading-[14px]">{h}</div>)}
        </div>
        <div className="relative w-[1629px]">
          <div className="absolute inset-0 grid grid-cols-7">
            {DAYS.map((d, i) => <span key={d} className={"border-r border-[#ddd] " + (i === 5 ? "bg-[#f0f0f0]" : "")} />)}
          </div>
          <div className="relative">
            {HOURS.map((h) => <div key={h} className="h-[42px] border-t border-[#ddd]"><div className="h-[21px] border-b border-dotted border-[#ddd]" /></div>)}
          </div>
          <div className="absolute inset-0">
            {EVENTS.map((e, i) => <Event key={i} e={e} />)}
            <div className="absolute left-[1163px] top-[284px] h-[2px] w-[233px] bg-[#fa7564]" />
          </div>
        </div>
        <svg width="4" height="8" viewBox="0 0 4 8" className="absolute left-0 top-[280px]"><path d="M0 0l4 4-4 4z" fill="#c33" /></svg>
      </div>
      <div className="relative ml-[8px] w-[10px]"><span className="absolute left-0 top-[164px] h-[616px] w-[9px] bg-[#c6c6c6]" /></div>
    </div>
  </div>
);

const Chrome = () => (
  <div className="flex h-[1040px] flex-1 flex-col bg-white pl-[8px] font-['Liberation_Sans',Arial,sans-serif]">
    <ChromeTop /><GoogleBar /><CalToolbar />
    <div className="flex min-h-0 flex-1"><CalSidebar /><WeekGrid /></div>
  </div>
);

/* ------------------------------------------------------------------ */
/* Windows taskbar                                                      */
/* ------------------------------------------------------------------ */

const Win = () => <svg width="16" height="16" viewBox="0 0 16 16"><path d="M0 2.200L6.600 1.300v6.300H0zM7.400 1.200L16 0v7.600H7.400zM0 8.400h6.600v6.300L0 13.800zM7.400 8.400H16V16l-8.600-1.200z" fill="#fff" /></svg>;
const TaskView = () => <svg width="20" height="14" viewBox="0 0 20 14" fill="none" stroke="#fff"><path d="M4.500.500h11v13h-11zM2.500 2.500h-2v9h2M17.500 2.500h2v9h-2" /></svg>;
const Explorer = () => <svg width="22" height="18" viewBox="0 0 22 18"><path d="M0 0h9l1 2h12v16H0z" fill="#f8d775" /><path d="M0 4h22v10H0z" fill="#ffe9a6" /><path d="M4 18v-8h14v8h-4v-4H8v4z" fill="#3fb5f0" /></svg>;
const Store = () => <svg width="21" height="22" viewBox="0 0 21 22"><path d="M6 5c0-5 8-5 8 0M9 5c0-5 8-5 8 0" fill="none" stroke="#fff" /><path d="M0 6l21-1v16L0 19z" fill="#fff" /><path d="M4 9l4-.300V12H4zM9 8.600l6-.400V12H9zM4 13h4v4l-4-.400zM9 13h6v4.600L9 17z" fill="#111" /></svg>;
const ChromeLogo = () => <svg width="22" height="22" viewBox="0 0 22 22"><circle cx="11" cy="11" r="11" fill="#fbc116" /><path d="M11 11L1.500 5.500A11 11 0 0 0 10 22l5-9z" fill="#2da94f" /><path d="M1.500 5.500A11 11 0 0 1 20.500 5.500H11L6.500 13z" fill="#e33b2e" /><circle cx="11" cy="11" r="5" fill="#fff" /><circle cx="11" cy="11" r="4" fill="#4285f4" /></svg>;
const Notepad = () => <svg width="22" height="22" viewBox="0 0 22 22"><path d="M6 1l16 2-4 17L0 16z" fill="#6fb9cc" /><path d="M6 1l16 2-1 4L5 5z" fill="#c5e8ee" /><path d="M0 16l18 4v2L0 18z" fill="#d8e4e6" /></svg>;
const Inv = () => <div className="flex h-[24px] w-[24px] flex-col items-center bg-gradient-to-br from-[#fff6ec] to-[#fbcfa4] pt-[2px]"><svg width="9" height="14" viewBox="0 0 9 14"><path d="M0 0h9v3L6.500 4v6L9 11v3H0v-3l2.500-1V4L0 3z" fill="#c8752a" /></svg><span className="self-end pr-px text-[5px] font-bold leading-[6px] text-[#e07818]">PRO</span></div>;
const Paint = () => <svg width="24" height="22" viewBox="0 0 24 22"><path d="M1 14C1 7 9 3 16 4c5 1 5 6 3 9-3 5-5 8-11 8-4 0-7-3-7-7z" fill="#a9d3ee" /><circle cx="5" cy="12" r="2" fill="#d33" /><circle cx="9" cy="8" r="2" fill="#e8a020" /><circle cx="14" cy="7" r="2" fill="#3a3" /><circle cx="10" cy="13" r="2" fill="#112" /><path d="M13 22L21 3M20 4l1-4 2 1-1 4z" stroke="#c98540" strokeWidth="2.500" /></svg>;

const TaskApp = ({ line = "w-[40px]", active, children }: { line?: string; active?: boolean; children: React.ReactNode }) => (
  <span className={"relative flex h-[40px] w-[49px] items-center justify-center " + (active ? "bg-[#3c3c3c]" : "")}>
    {children}<span className={"absolute bottom-0 h-[2px] bg-[#76b9ed] " + line} />
  </span>
);
const Pinned = () => (
  <>
    <TaskApp line="w-0"><TaskView /></TaskApp><TaskApp><Explorer /></TaskApp><TaskApp line="w-0"><Store /></TaskApp><TaskApp><ChromeLogo /></TaskApp><TaskApp><Notepad /></TaskApp><TaskApp active line="w-[49px]"><Inv /></TaskApp><TaskApp><Paint /></TaskApp>
  </>
);

const Taskbar = () => (
  <div className="relative flex h-[40px] bg-[#060504] font-['Open_Sans',sans-serif]">
    <span className="absolute left-0 top-0 h-[8px] w-[1928px] bg-[#262626]" />
    <div className="relative flex h-full w-[1920px] items-center text-white">
      <span className="flex w-[48px] justify-center"><Win /></span>
      <span className="flex h-full w-[344px] items-center bg-[#333] pl-[12px] text-[14px] tracking-[-0.050px] text-[#9b9b9b]">Search the web and Windows</span>
      <Pinned />
      <svg width="13" height="8" viewBox="0 0 13 8" className="ml-auto"><path d="M1 7l5.500-6L12 7" fill="none" stroke="#fff" strokeWidth="1.400" /></svg>
      <svg width="17" height="15" viewBox="0 0 17 15" fill="none" stroke="#fff" className="ml-[9px]"><path d="M4.500 2.500h12v8h-12M10 10.500v3M6 13.500h8M.500.500h4v4h-4zM2.500 5v7h3" /></svg>
      <svg width="16" height="14" viewBox="0 0 16 14" fill="none" stroke="#fff" className="ml-[8px]"><path d="M.500 4.500h3l3-3.500v12l-3-3.500h-3zM9 4.500c1 1.500 1 3.500 0 5M11 2.500c2 3 2 6 0 9" /><path d="M13 1c3 4 3 8 0 12" stroke="#777" /></svg>
      <svg width="16" height="16" viewBox="0 0 16 16" className="ml-[9px]"><path d="M0 0h16v12H10l-3 4v-4H0z" fill="#fff" /><path d="M3 3.500h10M3 6h10M3 8.500h7" stroke="#222" /></svg>
      <span className="ml-[8px] w-[62px] whitespace-nowrap text-center text-[11.500px] leading-[17px] tracking-[-0.500px]">11:49 AM<br />9/30/2016</span>
      <span className="ml-[3px] mr-[4px] h-full w-px bg-[#555]" />
    </div>
    <div className="relative flex h-full items-center">
      <span className="flex w-[48px] justify-center"><Win /></span>
      <span className="flex w-[48px] justify-center"><svg width="17" height="17" viewBox="0 0 17 17" fill="none" stroke="#fff" strokeWidth="1.400"><circle cx="10.500" cy="6" r="5" /><path d="M7 10l-6 6.500" /></svg></span>
      <Pinned />
    </div>
  </div>
);

export default function App() {
  return (
    <div className="flex h-[1080px] w-[3840px] flex-col overflow-hidden bg-white">
      <div className="flex h-[1040px]"><Inventor /><Chrome /></div>
      <Taskbar />
    </div>
  );
}
